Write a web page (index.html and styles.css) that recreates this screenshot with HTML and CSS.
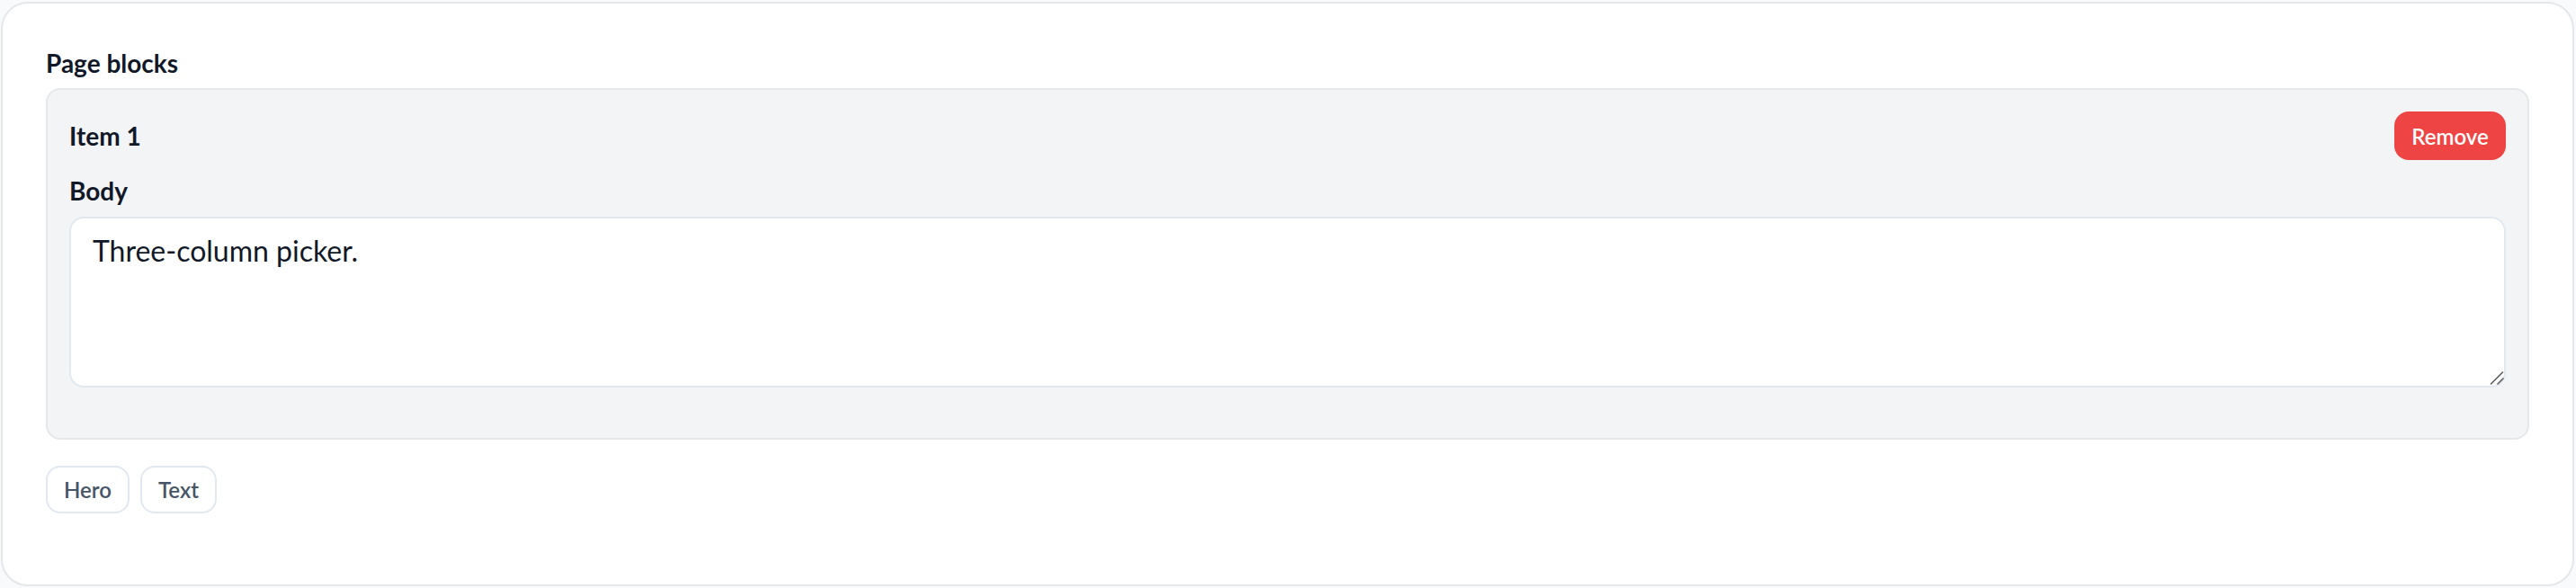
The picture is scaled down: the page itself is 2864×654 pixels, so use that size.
FILE: index.html
```html
<!DOCTYPE html>
<html lang="en">
<head>
<meta charset="utf-8">
<title>Page blocks</title>
<link rel="stylesheet" href="styles.css">
</head>
<body>
  <div class="panel">
    <div class="section-label">Page blocks</div>
    <div class="item-card">
      <div class="item-header">
        <div class="item-title">Item 1</div>
        <button class="btn-remove" type="button">Remove</button>
      </div>
      <label class="field-label" for="body-1">Body</label>
      <div class="field-wrap">
        <textarea id="body-1" class="field-textarea">Three-column picker.</textarea>
        <svg class="grabber" width="16" height="16" viewBox="0 0 16 16" aria-hidden="true">
          <path d="M1.5 15 L14.5 2" stroke="#5b5b5b" stroke-width="1.6" stroke-linecap="round"/>
          <path d="M9 15 L15 9" stroke="#5b5b5b" stroke-width="1.6" stroke-linecap="round"/>
        </svg>
      </div>
    </div>
    <div class="add-row">
      <button class="btn-add" type="button">Hero</button>
      <button class="btn-add" type="button">Text</button>
    </div>
  </div>
</body>
</html>
```
FILE: styles.css
```css
* { box-sizing: border-box; }
html, body { background: #f9fafb; }
body {
  margin: 2px 2px 2px 1px;
  font-family: Lato, "Noto Sans", "Liberation Sans", sans-serif;
  color: #111827;
}
.panel {
  height: 650px;
  background: #ffffff;
  border: 2px solid #e5e7eb;
  border-radius: 30px;
  padding: 46px 48px 48px 48px;
}
.section-label {
  font-size: 28px;
  line-height: 40px;
  font-weight: 700;
  color: #111827;
  margin-bottom: 8px;
}
.item-card {
  background: #f3f4f6;
  border: 2px solid #e5e7eb;
  border-radius: 16px;
  padding: 24px 24px 56px 24px;
}
.item-header {
  display: flex;
  align-items: center;
  justify-content: space-between;
  height: 54px;
  margin-bottom: 14px;
}
.item-title {
  font-size: 28px;
  line-height: 40px;
  font-weight: 700;
}
.btn-remove {
  height: 54px;
  width: 124px;
  border: none;
  border-radius: 16px;
  background: #ef4444;
  color: #ffffff;
  font-family: inherit;
  font-size: 24px;
  font-weight: 600;
  padding: 0;
  cursor: pointer;
}
.field-label {
  display: block;
  font-size: 28px;
  line-height: 40px;
  font-weight: 700;
  margin-bottom: 9px;
}
.field-wrap {
  position: relative;
}
.field-textarea {
  display: block;
  width: 100%;
  height: 190px;
  border: 2px solid #e2e8f0;
  border-radius: 16px;
  background: #ffffff;
  padding: 12px 24px;
  font-family: inherit;
  font-size: 32px;
  line-height: 48px;
  color: #111827;
  resize: none;
  margin: 0;
}
.grabber {
  position: absolute;
  right: 2px;
  bottom: 3px;
  pointer-events: none;
}
.add-row {
  display: flex;
  gap: 12px;
  margin-top: 29px;
}
.btn-add {
  height: 53px;
  padding: 0 18px;
  background: #ffffff;
  border: 2px solid #e2e8f0;
  border-radius: 16px;
  color: #475569;
  font-family: inherit;
  font-size: 24px;
  font-weight: 600;
  cursor: pointer;
}
```
